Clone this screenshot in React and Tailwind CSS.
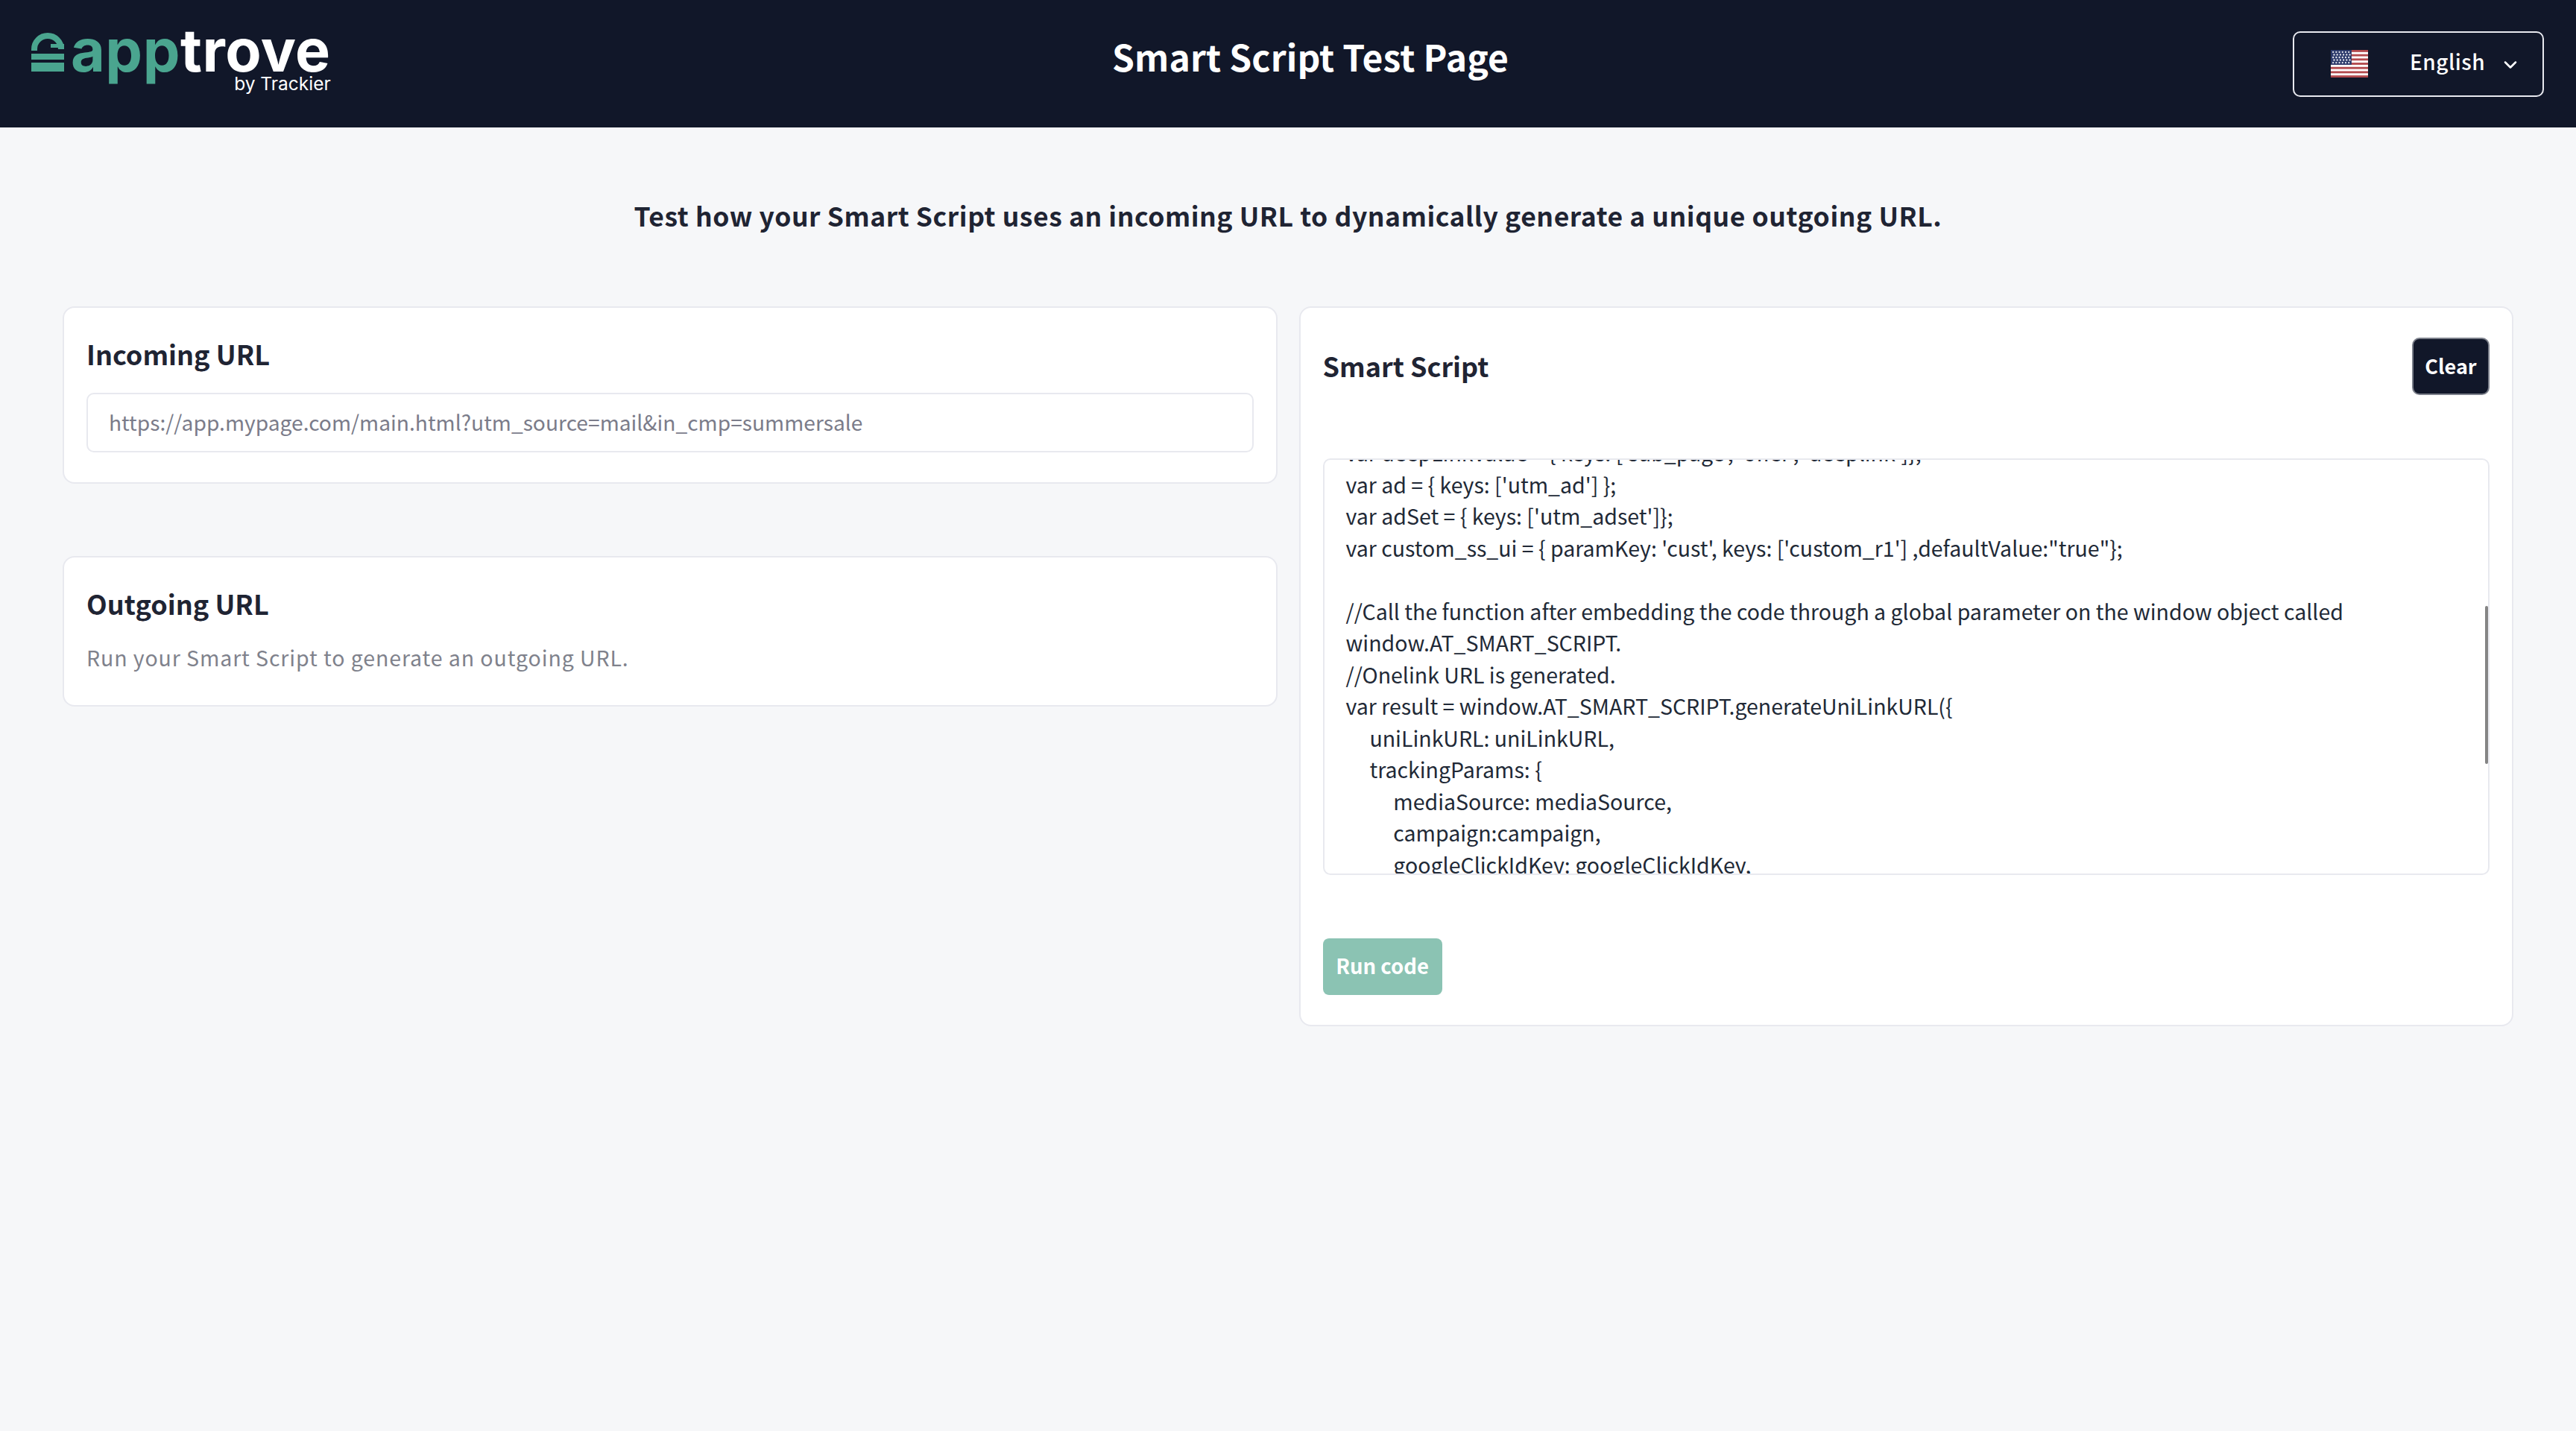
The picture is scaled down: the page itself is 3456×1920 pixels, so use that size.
import { ChevronDown } from "lucide-react";

const codeLines = [
  "var deepLinkValue = { keys: ['sub_page', 'offer', 'deeplink']};",
  "var ad = { keys: ['utm_ad'] };",
  "var adSet = { keys: ['utm_adset']};",
  "var custom_ss_ui = { paramKey: 'cust', keys: ['custom_r1'] ,defaultValue:\"true\"};",
  "",
  "//Call the function after embedding the code through a global parameter on the window object called",
  "window.AT_SMART_SCRIPT.",
  "//Onelink URL is generated.",
  "var result = window.AT_SMART_SCRIPT.generateUniLinkURL({",
  "     uniLinkURL: uniLinkURL,",
  "     trackingParams: {",
  "          mediaSource: mediaSource,",
  "          campaign:campaign,",
  "          googleClickIdKey: googleClickIdKey,",
];

function Flag() {
  const stripes = [0, 2, 4, 6, 8, 10, 12];
  const stars = [];
  for (let r = 0; r < 5; r++) {
    for (let c = 0; c < 6; c++) {
      stars.push(<circle key={r + "-" + c} cx={1.2 + c * 1.6 + (r % 2) * 0.5} cy={1 + r * 1.25} r="0.42" fill="#e6e8f0" />);
    }
  }
  return (
    <svg width="50" height="37" viewBox="0 0 19 13" preserveAspectRatio="none">
      <rect width="19" height="13" fill="#fff" />
      {stripes.map((y) => (
        <rect key={y} y={y} width="19" height="1" fill="#b34a4e" />
      ))}
      <rect width="10.6" height="7" fill="#2c3a6b" />
      {stars}
    </svg>
  );
}

function Logo() {
  return (
    <div className="flex items-start">
      <svg width="44" height="52" viewBox="0 0 44 52" className="mt-[8px] shrink-0">
        <path d="M4 24 V22 A18 18 0 0 1 40 22 V20" fill="none" stroke="#4aa58f" strokeWidth="8" />
        <rect x="26" y="15" width="18" height="5" fill="#4aa58f" />
        <rect y="28" width="44" height="8" fill="#4aa58f" />
        <rect y="40" width="44" height="12" fill="#4aa58f" />
      </svg>
      <div className="ml-[9px] flex flex-col items-end">
        <div className="font-['Inter',sans-serif] text-[79px] leading-[62px] font-bold tracking-[0.5px]">
          <span className="text-[#4aa58f]">app</span>
          <span className="text-white">trove</span>
        </div>
        <div className="font-['Inter',sans-serif] text-[24.5px] leading-[28px] text-white">by Trackier</div>
      </div>
    </div>
  );
}

export default function App() {
  return (
    <div className="min-h-screen bg-[#f6f7f9] font-['Noto_Sans_CJK_SC','Noto_Sans',sans-serif] text-[#1f2433]">
      <header className="flex h-[171px] items-center justify-between bg-[#111729] pl-[42px] pr-[43px]">
        <div className="w-[398px] pb-[10px]">
          <Logo />
        </div>
        <h1 className="pb-[22px] text-[48px] leading-[64px] font-semibold tracking-[0.1px] text-white">Smart Script Test Page</h1>
        <button className="flex h-[88px] w-[337px] items-center rounded-[10px] border-2 border-[#e8e9ef] pl-[49px] text-white">
          <Flag />
          <span className="ml-[56px] pb-[7px] text-[28px] font-medium tracking-[0.5px]">English</span>
          <ChevronDown className="ml-[20px] mt-[2px] h-[28px] w-[28px]" strokeWidth={2.2} />
        </button>
      </header>

      <main className="px-[84px]">
        <p className="pt-[90px] pb-[94px] text-center text-[35.5px] leading-[56px] font-semibold tracking-[0.55px]">
          Test how your Smart Script uses an incoming URL to dynamically generate a unique outgoing URL.
        </p>

        <div className="grid grid-cols-2 items-start gap-[29px]">
          <div className="flex flex-col gap-[97px]">
            <section className="h-[238px] rounded-[16px] border-2 border-[#e8e9ef] bg-white px-[30px] pt-[36px]">
              <h2 className="text-[36px] leading-[50px] font-semibold">Incoming URL</h2>
              <input
                readOnly
                placeholder="https://app.mypage.com/main.html?utm_source=mail&in_cmp=summersale"
                className="mt-[28px] h-[80px] w-full rounded-[10px] border-2 border-[#e8e9ef] bg-white px-[28px] pb-[4px] text-[28.2px] outline-none placeholder:text-[#7b7c8a]"
              />
            </section>
            <section className="h-[202px] rounded-[16px] border-2 border-[#e8e9ef] bg-white px-[30px] pt-[36px]">
              <h2 className="text-[36px] leading-[50px] font-semibold">Outgoing URL</h2>
              <p className="mt-[26px] text-[28.5px] leading-[44px] tracking-[0.9px] text-[#7f828c]">Run your Smart Script to generate an outgoing URL.</p>
            </section>
          </div>

          <section className="h-[966px] rounded-[16px] border-2 border-[#e8e9ef] bg-white px-[30px] pt-[40px]">
            <div className="flex h-[77px] items-center justify-between">
              <h2 className="pb-[4px] text-[36px] leading-[50px] font-semibold">Smart Script</h2>
              <button className="h-[77px] w-[104px] rounded-[10px] border-2 border-[#7b7f8a] bg-[#111729] text-[27px] font-semibold text-white">Clear</button>
            </div>
            <div className="relative mt-[85px] h-[559px] overflow-hidden rounded-[10px] border-2 border-[#e8e9ef] bg-white">
              <div className="-mt-[31px] px-[29px] text-[28.5px] leading-[42.5px] whitespace-pre text-[#212936]">
                {codeLines.map((line, i) => (
                  <div key={i} className="h-[42.5px]">{line}</div>
                ))}
              </div>
              <div className="absolute right-0 top-[196px] h-[212px] w-[4px] rounded-full bg-[#858585]" />
            </div>
            <button className="mt-[85px] h-[76px] w-[160px] rounded-[8px] bg-[#8bc3b3] pb-[2px] text-[27.5px] font-semibold text-white">Run code</button>
          </section>
        </div>
      </main>
    </div>
  );
}
